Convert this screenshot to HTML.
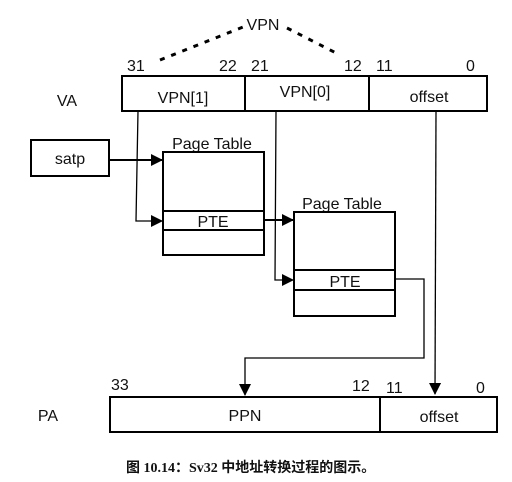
<!DOCTYPE html>
<html><head><meta charset="utf-8"><style>
html,body{margin:0;padding:0;background:#fff;width:512px;height:482px;overflow:hidden}
svg{display:block}
text{font-family:"Liberation Sans",sans-serif;fill:#111}
</style></head><body>
<svg width="512" height="482" viewBox="0 0 512 482" xmlns="http://www.w3.org/2000/svg">
<defs><marker id="b" markerWidth="12" markerHeight="12" refX="11" refY="6" orient="auto" markerUnits="userSpaceOnUse"><path d="M0,0 L12,6 L0,12 z" fill="#000"/></marker></defs>
<g font-size="16">
<text x="263" y="30" text-anchor="middle">VPN</text>
<text x="127" y="71">31</text><text x="219" y="71">22</text><text x="251" y="71">21</text>
<text x="344" y="71">12</text><text x="376" y="71">11</text><text x="466" y="71">0</text>
<text x="67" y="106" text-anchor="middle">VA</text>
<g text-anchor="middle">
<text x="183" y="103">VPN[1]</text><text x="305" y="97">VPN[0]</text><text x="429" y="102">offset</text>
<text x="70" y="164">satp</text>
<text x="212" y="149">Page Table</text><text x="342" y="209">Page Table</text>
<text x="213" y="227">PTE</text><text x="345" y="287">PTE</text>
<text x="245" y="421">PPN</text><text x="439" y="422">offset</text>
<text x="48" y="421">PA</text>
</g>
<text x="111" y="390">33</text><text x="352" y="391">12</text><text x="386" y="393">11</text><text x="476" y="393">0</text>
</g>
<path d="M160,60 L243,27 M287,28 L340,55" stroke="#000" stroke-width="3" stroke-dasharray="5,7" fill="none"/>
<g fill="none" stroke="#000" stroke-width="2">
<rect x="122" y="76" width="365" height="35"/>
<line x1="245" y1="75" x2="245" y2="111"/><line x1="369" y1="76" x2="369" y2="111"/>
<rect x="31" y="140" width="78" height="36"/>
<rect x="163" y="152" width="101" height="103"/>
<line x1="163" y1="211" x2="264" y2="211"/><line x1="163" y1="230" x2="264" y2="230"/>
<rect x="294" y="212" width="101" height="104"/>
<line x1="294" y1="270" x2="395" y2="270"/><line x1="294" y1="290" x2="395" y2="290"/>
<rect x="110" y="397" width="387" height="35"/>
<line x1="380" y1="397" x2="380" y2="432"/>
<line x1="109" y1="160" x2="162" y2="160" marker-end="url(#b)"/>
<line x1="264" y1="220" x2="293" y2="220" marker-end="url(#b)"/>
</g>
<g fill="none" stroke="#000" stroke-width="1.3">
<polyline points="138,111 136,221 162,221" marker-end="url(#b)"/>
<polyline points="276,111 275,280 293,280" marker-end="url(#b)"/>
<polyline points="436,112 435,394" marker-end="url(#b)"/>
<polyline points="394,279 424,279 424,358 245,358 245,395" marker-end="url(#b)"/>
</g>
<text x="126" y="472" font-size="14" font-weight="bold" style="font-family:'Liberation Serif','Noto Sans CJK SC',serif">图 10.14：Sv32 中地址转换过程的图示。</text>
</svg>
</body></html>
